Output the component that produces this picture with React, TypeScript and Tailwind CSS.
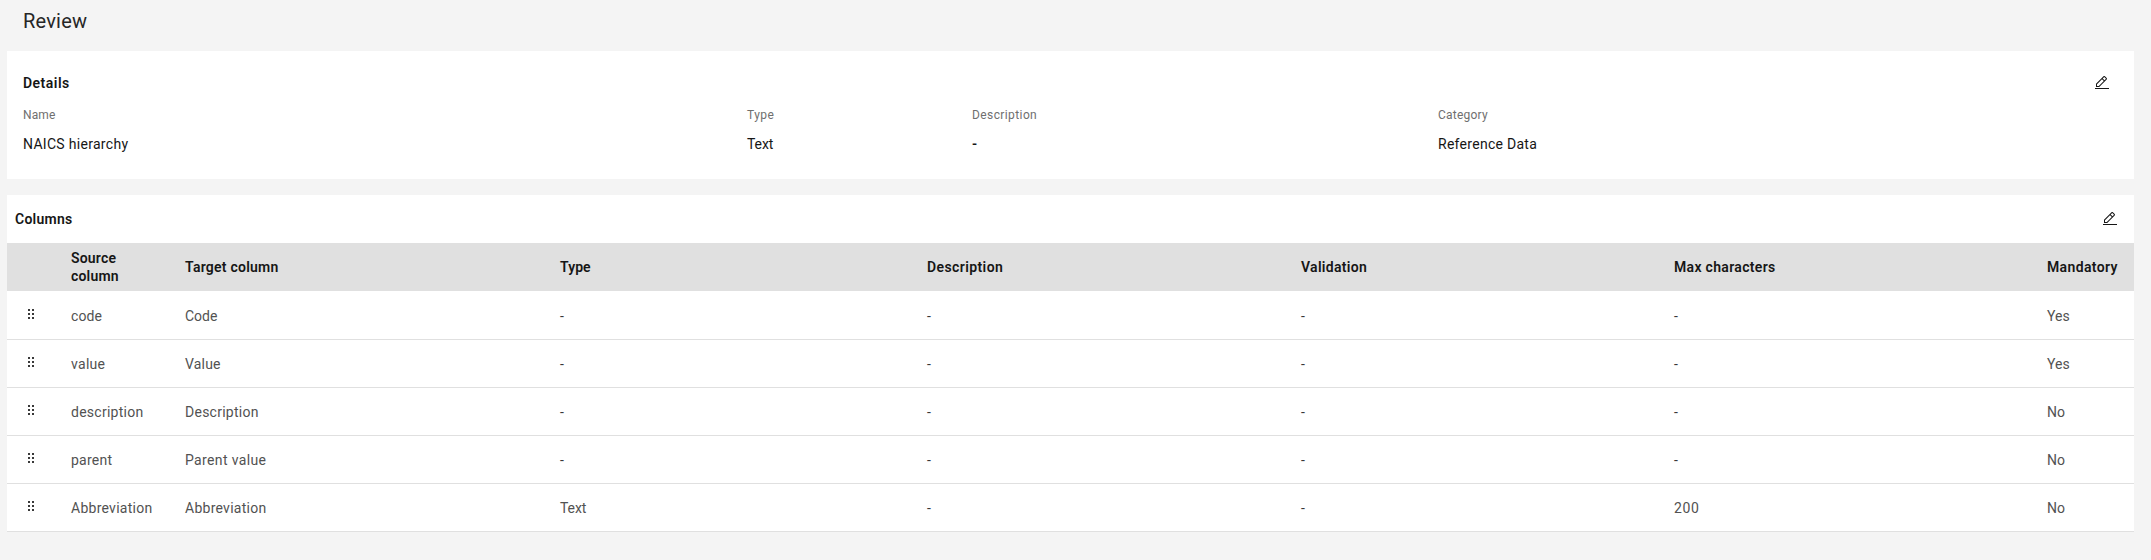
type Row = {
  source: string;
  target: string;
  type: string;
  max: string;
  mandatory: string;
};

const rows: Row[] = [
  { source: "code", target: "Code", type: "-", max: "-", mandatory: "Yes" },
  { source: "value", target: "Value", type: "-", max: "-", mandatory: "Yes" },
  { source: "description", target: "Description", type: "-", max: "-", mandatory: "No" },
  { source: "parent", target: "Parent value", type: "-", max: "-", mandatory: "No" },
  { source: "Abbreviation", target: "Abbreviation", type: "Text", max: "200", mandatory: "No" },
];

const details = [
  { label: "Name", value: "NAICS hierarchy", labelStyle: "tracking-[0.13px]", valueStyle: "tracking-[0.3px]" },
  { label: "Type", value: "Text", labelStyle: "tracking-[0.45px]", valueStyle: "tracking-[-0.1px]" },
  { label: "Description", value: "-", labelStyle: "tracking-[0.4px]", valueStyle: "font-semibold" },
  { label: "Category", value: "Reference Data", labelStyle: "tracking-[0.23px]", valueStyle: "tracking-[0.28px]" },
];

const grid = "grid grid-cols-[64px_114px_375px_367px_374px_373px_373px_87px] h-12 items-center leading-[18px]";

// Tracking for the words whose width differs from the table default.
const tracking: Record<string, string> = {
  code: "tracking-[0.1px]",
  Code: "tracking-normal",
  value: "tracking-[0.3px]",
  Value: "tracking-[0.17px]",
  "Parent value": "tracking-[0.35px]",
  Text: "tracking-[-0.1px]",
  No: "tracking-normal",
  Yes: "tracking-normal",
  "200": "tracking-[0.6px]",
};

function EditIcon() {
  return (
    <svg width="16" height="16" viewBox="0 0 32 32" fill="#161616" aria-hidden="true">
      <path d="M2 26H30V28H2z" />
      <path d="M25.4,9c0.8-0.8,0.8-2,0-2.8c0,0,0,0,0,0l-3.6-3.6c-0.8-0.8-2-0.8-2.8,0c0,0,0,0,0,0l-15,15V24h6.4L25.4,9z M20.4,4L24,7.6l-3,3L17.4,7L20.4,4z M6,22v-3.6l10-10l3.6,3.6l-10,10H6z" />
    </svg>
  );
}

function DragIcon() {
  return (
    <svg width="16" height="16" viewBox="0 0 32 32" fill="#393939" aria-hidden="true">
      <path d="M10 6h4v4h-4zM18 6h4v4h-4zM10 14h4v4h-4zM18 14h4v4h-4zM10 22h4v4h-4zM18 22h4v4h-4z" />
    </svg>
  );
}

function Cell({ text }: { text: string }) {
  return (
    <div className={tracking[text] ?? "tracking-[0.26px]"}>
      {text === "-" ? <span className="text-[#393939]">-</span> : text}
    </div>
  );
}

export default function App() {
  return (
    <div className="h-[560px] w-[2151px] overflow-hidden bg-[#f4f4f4] pl-[7px] font-[Roboto,sans-serif] text-sm text-[#161616]">
      <h1 className="h-[51px] pt-[7px] pl-4 text-xl leading-[28px] tracking-[0.2px] text-[#262626]">Review</h1>

      <section className="h-32 w-[2127px] bg-white pt-[22px] pl-4">
        <div className="flex h-[20px] items-center justify-between pr-6">
          <h2 className="leading-[18px] font-semibold tracking-[0.48px]">Details</h2>
          <EditIcon />
        </div>
        <dl className="mt-3.5 grid grid-cols-[724px_225px_466px_1fr]">
          {details.map((d) => (
            <div key={d.label}>
              <dt className={"text-xs leading-4 text-[#6f6f6f] " + d.labelStyle}>{d.label}</dt>
              <dd className={"mt-3 leading-[18px] " + d.valueStyle}>{d.value}</dd>
            </div>
          ))}
        </dl>
      </section>

      <section className="mt-4 w-[2127px] bg-white">
        <div className="flex h-12 items-center justify-between pr-4 pl-2">
          <h2 className="leading-[18px] font-semibold tracking-[0.25px]">Columns</h2>
          <EditIcon />
        </div>
        <div className={grid + " bg-[#e0e0e0] font-semibold"}>
          <div />
          <div className="w-14 tracking-[0.18px]">Source column</div>
          <div className="tracking-[0.24px]">Target column</div>
          <div className="tracking-[0.05px]">Type</div>
          <div className="tracking-[0.4px]">Description</div>
          <div className="tracking-[0.31px]">Validation</div>
          <div className="tracking-[0.32px]">Max characters</div>
          <div className="tracking-[0.36px]">Mandatory</div>
        </div>
        <div className="pt-px">
          {rows.map((r) => (
            <div key={r.source} className={grid + " border-b border-[#e0e0e0] text-[#525252]"}>
              <div className="pb-[3px] pl-4">
                <DragIcon />
              </div>
              <Cell text={r.source} />
              <Cell text={r.target} />
              <Cell text={r.type} />
              <Cell text="-" />
              <Cell text="-" />
              <Cell text={r.max} />
              <Cell text={r.mandatory} />
            </div>
          ))}
        </div>
      </section>
    </div>
  );
}
